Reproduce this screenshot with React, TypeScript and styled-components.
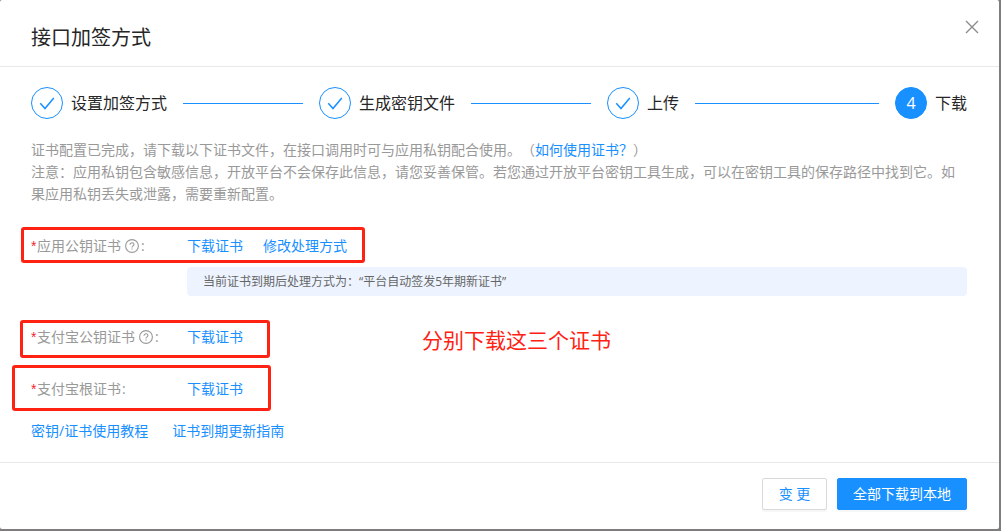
import React from "react";
import styled, { createGlobalStyle } from "styled-components";

const blue = "#1890ff";
const red = "#ff2213";

const GlobalStyle = createGlobalStyle`
  *, *::before, *::after { box-sizing: border-box; }
  body {
    margin: 0;
    background: #7f7c7c;
    color: #262626;
    font-family: "Open Sans", "Noto Sans CJK SC", sans-serif;
    font-size: 14px;
    line-height: 22px;
    text-spacing-trim: space-all;
  }
  button { font-family: inherit; }
`;

const Dialog = styled.section`
  margin: 0 2px 2px 0;
  background: #fff;
  border-radius: 2px;
`;

const Header = styled.header`
  display: flex;
  align-items: flex-start;
  justify-content: space-between;
  padding: 16px 20px 16px 31px;
  border-bottom: 1px solid #e8e8e8;
`;

const Title = styled.h1`
  margin: 10px 0 0;
  font-size: 20px;
  line-height: 24px;
  font-weight: 400;
`;

const CloseButton = styled.button`
  display: flex;
  padding: 4px 0;
  border: 0;
  background: none;
  color: #8c8c8c;
  cursor: pointer;
`;

const Body = styled.div`
  padding: 20px 32px 20px 31px;
`;

const Steps = styled.ol`
  display: flex;
  margin: 0 0 20px;
  padding: 0;
  list-style: none;
`;

const StepItem = styled.li<{ $last?: boolean }>`
  display: flex;
  align-items: center;
  flex: ${(p) => (p.$last ? "none" : "1 1 0")};
  font-size: 16px;
  line-height: 32px;
  white-space: nowrap;

  &:not(:last-child)::after {
    content: "";
    flex: 1;
    height: 1px;
    margin: 0 16px;
    background: ${blue};
  }
`;

const StepIcon = styled.span<{ $active?: boolean }>`
  display: flex;
  align-items: center;
  justify-content: center;
  width: 32px;
  height: 32px;
  margin-right: 8px;
  border: 1px solid ${blue};
  border-radius: 50%;
  background: ${(p) => (p.$active ? blue : "#fff")};
  color: ${(p) => (p.$active ? "#fff" : blue)};
`;

const Description = styled.p`
  margin: 0 0 30px;
  color: #999;
`;

const Link = styled.a`
  color: ${blue};
  text-decoration: none;
`;

const CertList = styled.div`
  display: grid;
  row-gap: 30px;
  margin-bottom: 20px;
`;

const Row = styled.div`
  position: relative;
  display: grid;
  grid-template-columns: 156px 1fr;
  row-gap: 10px;
`;

const Label = styled.div`
  display: flex;
  align-items: center;
  color: #999;
`;

const Required = styled.span`
  width: 6px;
  color: #f5222d;
  font-family: "Liberation Sans", sans-serif;
`;

const Colon = styled.span`
  margin-left: 1px;
`;

const HelpIcon = styled.svg`
  margin: 0 1px 0 4px;
`;

const LinkGroup = styled.div<{ $gap: number }>`
  display: flex;
  gap: ${(p) => p.$gap}px;
`;

const Notice = styled.div`
  grid-column: 2;
  padding: 5px 16px 4px;
  border-radius: 4px;
  background: #edf4ff;
  color: #666;
  font-size: 12px;
  line-height: 20px;
`;

const Highlight = styled.div<{ $left: number; $top: number; $width: number; $height: number }>`
  position: absolute;
  left: ${(p) => p.$left}px;
  top: ${(p) => p.$top}px;
  width: ${(p) => p.$width}px;
  height: ${(p) => p.$height}px;
  border: 3px solid ${red};
  border-radius: 3px;
  pointer-events: none;
`;

const Remark = styled.div`
  position: absolute;
  left: 391px;
  top: 0;
  color: ${red};
  font-size: 21px;
  line-height: 28px;
  white-space: nowrap;
`;

const Footer = styled.footer`
  display: flex;
  justify-content: flex-end;
  gap: 10px;
  padding: 15px 32px 19px;
  border-top: 1px solid #e8e8e8;
`;

const Button = styled.button<{ $primary?: boolean }>`
  min-width: 65px;
  height: 32px;
  padding: 0 15px;
  border: 1px solid ${(p) => (p.$primary ? blue : "#d9d9d9")};
  border-radius: 2px;
  background: ${(p) => (p.$primary ? blue : "#fff")};
  box-shadow: 0 2px 0 rgba(0, 0, 0, 0.03);
  color: ${(p) => (p.$primary ? "#fff" : blue)};
  font-size: 14px;
  line-height: 22px;
  cursor: pointer;
`;

function Check() {
  return (
    <svg width="16" height="16" viewBox="0 0 16 16" fill="none" aria-hidden="true">
      <path d="M1.3 8.2 6 13.6 14.8 3" stroke="currentColor" strokeWidth="1.5" />
    </svg>
  );
}

function Help() {
  return (
    <HelpIcon width="14" height="14" viewBox="0 0 14 14" fill="none" stroke="currentColor" role="img" aria-label="帮助">
      <circle cx="7" cy="7" r="6.4" strokeWidth="1.1" />
      <path d="M5 5.7C5 4.5 5.9 3.8 7 3.8s2 .7 2 1.8c0 1.2-2 1.4-2 2.8" strokeWidth="1.1" />
      <path d="M7 9.4v1.2" strokeWidth="1.2" />
    </HelpIcon>
  );
}

const steps = ["设置加签方式", "生成密钥文件", "上传", "下载"];

export default function App() {
  return (
    <>
      <GlobalStyle />
      <Dialog role="dialog" aria-labelledby="dialog-title">
        <Header>
          <Title id="dialog-title">接口加签方式</Title>
          <CloseButton type="button" aria-label="关闭">
            <svg width="14" height="14" viewBox="0 0 14 14" fill="none" aria-hidden="true">
              <path d="M1 1 13 13M13 1 1 13" stroke="currentColor" strokeWidth="1.4" />
            </svg>
          </CloseButton>
        </Header>
        <Body>
          <Steps>
            {steps.map((name, i) => {
              const last = i === steps.length - 1;
              return (
                <StepItem key={name} $last={last}>
                  <StepIcon $active={last}>{last ? i + 1 : <Check />}</StepIcon>
                  {name}
                </StepItem>
              );
            })}
          </Steps>
          <Description>
            证书配置已完成，请下载以下证书文件，在接口调用时可与应用私钥配合使用。（<Link href="#usage">如何使用证书？</Link>）
            <br />
            注意：应用私钥包含敏感信息，开放平台不会保存此信息，请您妥善保管。若您通过开放平台密钥工具生成，可以在密钥工具的保存路径中找到它。如果应用私钥丢失或泄露，需要重新配置。
          </Description>
          <CertList>
            <Row>
              <Label><Required>*</Required>应用公钥证书<Help /><Colon>:</Colon></Label>
              <LinkGroup $gap={20}>
                <Link href="#app-cert">下载证书</Link>
                <Link href="#renewal">修改处理方式</Link>
              </LinkGroup>
              <Notice>当前证书到期后处理方式为：“平台自动签发5年期新证书”</Notice>
              <Highlight $left={-10} $top={-8} $width={344} $height={36} />
            </Row>
            <Row>
              <Label><Required>*</Required>支付宝公钥证书<Help /><Colon>:</Colon></Label>
              <LinkGroup $gap={20}>
                <Link href="#alipay-cert">下载证书</Link>
              </LinkGroup>
              <Highlight $left={-11} $top={-6} $width={250} $height={38} />
              <Remark>分别下载这三个证书</Remark>
            </Row>
            <Row>
              <Label><Required>*</Required>支付宝根证书<Colon>:</Colon></Label>
              <LinkGroup $gap={20}>
                <Link href="#root-cert">下载证书</Link>
              </LinkGroup>
              <Highlight $left={-19} $top={-13} $width={259} $height={46} />
            </Row>
          </CertList>
          <LinkGroup as="nav" $gap={24}>
            <Link href="#tutorial">密钥/证书使用教程</Link>
            <Link href="#update-guide">证书到期更新指南</Link>
          </LinkGroup>
        </Body>
        <Footer>
          <Button type="button">变 更</Button>
          <Button type="button" $primary>全部下载到本地</Button>
        </Footer>
      </Dialog>
    </>
  );
}
